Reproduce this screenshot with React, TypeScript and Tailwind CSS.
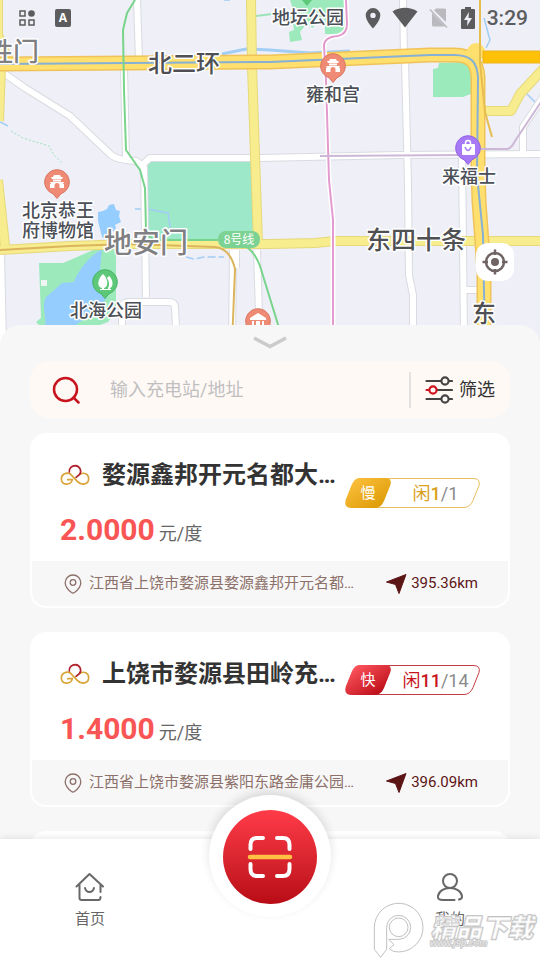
interface Station {
  id: number
  name: string
  price: string
  address: string
  distance: string
  speed: 'slow' | 'fast'
  free: number
  total: number
}

const stations: Station[] = [
  {
    id: 1,
    name: '婺源鑫邦开元名都大…',
    price: '2.0000',
    address: '江西省上饶市婺源县婺源鑫邦开元名都…',
    distance: '395.36km',
    speed: 'slow',
    free: 1,
    total: 1,
  },
  {
    id: 2,
    name: '上饶市婺源县田岭充…',
    price: '1.4000',
    address: '江西省上饶市婺源县紫阳东路金庸公园…',
    distance: '396.09km',
    speed: 'fast',
    free: 11,
    total: 14,
  },
]

const speedStyles = {
  slow: { label: '慢', text: 'text-[#d9a01c]', place: 'mt-[45px]', from: '#fbbf3b', to: '#dc9a05', line: '#e8bd5c' },
  fast: { label: '快', text: 'text-[#c9151e]', place: 'mt-[33px]', from: '#ff5660', to: '#b80a14', line: '#c23a42' },
}

function Temple() {
  return (
    <path
      d="M-6 -5h2l1-2h6l1 2h2l-1 2h-10zM-4 -2.500h8v2h-8zM-7 0h14l-1 2h1v4h-4.500v-2.500a2.500 2.500 0 0 0-5 0V6H-7V2h1z"
      fill="#fff"
    />
  )
}

function Pin({ x, y, fill, stroke, children }: { x: number; y: number; fill: string; stroke: string; children?: React.ReactNode }) {
  return (
    <g transform={`translate(${x} ${y})`}>
      <path d="M0 16.500l-4-4.800A12.300 12.300 0 1 1 4 11.700z" fill={fill} stroke={stroke} strokeWidth="1" />
      {children}
    </g>
  )
}

function CityMap() {
  return (
    <svg
      className="h-full w-full font-['Noto_Sans_CJK_SC',sans-serif]"
      viewBox="0 0 540 345"
      preserveAspectRatio="xMidYMin slice"
      role="img"
      aria-label="地图"
    >
      <rect width="540" height="345" fill="#eeeff7" />

      {/* Parks and water */}
      <path d="M290 0h55v30l-6 4h-14v-14h-8l-4 8-6-4-4 4-3 4 2 8-12 2-1-10 5-2-1-8-3-4 4-6z" fill="#9ceabc" />
      <path d="M433 69l5-1 1-5 26-1c5 2 8 8 8 14v17l-10 4h-30z" fill="#9aeabb" />
      <path d="M146 166l4-6h101l4 80-109-1z" fill="#9de8c8" />
      <path d="M39 263h24l28-12 14-9h11v70l-8 10-8 3v20H45v-14l-9-9 5-4z" fill="#9ceabc" />
      <path d="M102 249l-2 20 6 30-10 10-16 13-4 3H45c2-8-4-18 1-28l16-14 12-1c4-12 16-26 28-33z" fill="#96cdff" />
      <rect x="41" y="280" width="6" height="6" fill="#eef5f2" />
      <path d="M98 212l5-1 4-2 2-4 5-1 2 6 4 1-1 5 2 6-6 3 1 3-5 6-3 7-6-4-4-16z" fill="#96cdff" />
      <g fill="none" stroke="#a2cdf5" strokeWidth="2">
        <path d="M222 54l24-5 24 1 40 3 40-2" strokeWidth="3" />
        <path d="M135 209h8M147 209l21 4 3 20" strokeWidth="1.500" />
        <path d="M186 257l8 2 10-2h20" strokeWidth="1.500" strokeDasharray="8 3" />
        <path d="M484 18l6 22-4 8M527 94l8 8M0 122l8 4M224 0h6" strokeWidth="1.500" />
      </g>
      <path d="M11 131l12 7 26 8 5 9 8 8" fill="none" stroke="#9de3b8" strokeWidth="1" strokeDasharray="2 2" />
      <path d="M256 16l16-2" stroke="#9de3b8" strokeWidth="2" />

      {/* Side streets, grey casing first */}
      {[
        ['#d9dbe0', 8],
        ['#ffffff', 6],
      ].map(([color, width]) => (
        <g key={color} fill="none" stroke={color} strokeWidth={width} strokeLinejoin="round">
          <path d="M137 0l2 60M124 68l2 92M403 0l1 55M405 60l3 125 1 90 4 20v50" />
          <path d="M5 74l20 14 45 28 38 36q6 7 18 8l10 1 8 6 2 130M142 165l8-7h110l140-3 140-1" />
          <path d="M462 155l1 90 1 90M465 290h14M523 155v-28l20-30" />
          <path d="M3 345l-2-90M122 345v-38q1-5 7-5h40q6 0 6 6l2 37M233 250l-1 95M236 250v18M257 250l3 95" />
        </g>
      ))}

      {/* Main roads */}
      {[
        ['#e6d87b', 10],
        ['#f7ed8e', 8],
      ].map(([color, width]) => (
        <g key={color} fill="none" stroke={color} strokeWidth={width} strokeLinejoin="round">
          <path d="M251 0l1 66 6 178M0 250l70-4 60-2h140l45-1 20-2h205M485 111h26l9-17 24-26" />
          <path d="M-2 0v35l12 28M1 66l-2 55M-2 180l7 66" />
        </g>
      ))}
      {[
        ['#efc35a', 15],
        ['#ffdf6d', 12],
      ].map(([color, width]) => (
        <path
          key={color}
          d="M0 64l270-2 160-7h24c18 0 23 8 24 22v94l1 30 5 70v80"
          fill="none"
          stroke={color}
          strokeWidth={width}
        />
      ))}
      <circle cx="476" cy="52" r="9" fill="#ffdf6d" />
      <path d="M483 51h57v12h-57z" fill="#ffc107" stroke="#eeb21a" />
      <path d="M0 64l270-2 160-7h24c18 0 23 8 24 22l-1 98 6 60 2 110" fill="none" stroke="#86b0d6" strokeWidth="2" />
      <path d="M480 0v62l5 50 7 25" fill="none" stroke="#e6bd4f" strokeWidth="2" />

      {/* Metro lines */}
      <g fill="none" strokeWidth="2" strokeLinejoin="round">
        <path d="M0 250l70-4 60-2 85 3c10 1 17 9 20 22l-3 76" stroke="#dbb45c" />
        <path d="M135 0l-8 13-4 17 1 60 2 60 14 20 5 18 1 43q2 8 12 9h60q32-2 42 26l20 65" stroke="#79d48b" />
        <path d="M346 0l1 24q0 10-9 12-14 1-14 10l2 34 3 100 4 40v120" stroke="#fff" strokeWidth="5" />
        <path d="M346 0l1 24q0 10-9 12-14 1-14 10l2 34 3 100 4 40v120" stroke="#e39ace" />
        <path d="M320 156l145-1M481 149h26q4 0 8-8l28-42" stroke="#ccb7d7" />
      </g>
      <rect x="218" y="231" width="42" height="17" rx="8" fill="#7bd293" />
      <text x="239" y="244" fontSize="12" fill="#fff" textAnchor="middle">8号线</text>

      {/* Places */}
      <Pin x={57} y={182} fill="#ef8a75" stroke="#d9745f"><Temple /></Pin>
      <Pin x={333} y={66} fill="#ef8a75" stroke="#d9745f"><Temple /></Pin>
      <Pin x={258} y={321} fill="#ef8a75" stroke="#d9745f">
        <path d="M-8 -3l8-5 8 5v2H-8zM-6 0h2v7h-2zM-2 0h4v7h-4zM4 0h2v7H4z" fill="#fff" />
      </Pin>
      <Pin x={105} y={282} fill="#5cc878" stroke="#49b266">
        <path d="M-2 -8c5 4 6 13 1 14v2h-2V6c-6-1-4-10 1-14zM4 -6c4 3 5 11 1 12v2H3V6c2-3 1-7-1-10zM-5 7H6v1H-5z" fill="#fff" />
      </Pin>
      <Pin x={468} y={148} fill="#a779f6" stroke="#9163e2">
        <rect x="-6" y="-4" width="13" height="11" rx="1" fill="#fff" />
        <path d="M-2.500 -4v-1a2.500 2.500 0 0 1 5 0v1" fill="none" stroke="#fff" strokeWidth="1.500" />
        <path d="M-3 -1q3 7 6 0" fill="none" stroke="#a779f6" strokeWidth="1.500" />
      </Pin>
      <path d="M302 0l5 6 5-6z" fill="#5cc878" />

      <g fill="#4b4f57" stroke="#fff" strokeWidth="3" strokeLinejoin="round" paintOrder="stroke" fontWeight="500" fontSize="18">
        <text x="272" y="24">地坛公园</text>
        <text x="306" y="101">雍和宫</text>
        <text x="442" y="183">来福士</text>
        <text x="22" y="217">北京恭王</text>
        <text x="22" y="237">府博物馆</text>
        <text x="70" y="317">北海公园</text>
        <g fill="#4f5053" fontSize="24">
          <text x="148" y="72">北二环</text>
          <text x="472" y="322">东</text>
          <text x="366" y="249" fontSize="25">东四十条</text>
        </g>
        <g fill="#808083" fontSize="28">
          <text x="104" y="253">地安门</text>
          <text x="-13" y="61" fontSize="26">胜门</text>
        </g>
      </g>
    </svg>
  )
}

function StatusBar() {
  return (
    <div className="absolute inset-x-0 top-0 flex h-9 items-center justify-between pr-3 pl-[18px] text-[#5c5c5e]">
      <div className="flex items-center gap-[19px]">
        <svg width="18" height="18" viewBox="0 0 18 18" fill="none" stroke="currentColor" strokeWidth="1.500">
          <path d="M2 2h5v5H2zM2 11h5v5H2zM11 11h5v5h-5z" />
          <circle cx="13.500" cy="4.500" r="3.300" fill="currentColor" stroke="none" />
        </svg>
        <span className="flex h-[18px] w-4 items-center justify-center rounded-xs bg-[#5c5c5e] font-['Open_Sans',sans-serif] text-xs font-bold text-white">
          A
        </span>
      </div>
      <div className="flex items-center gap-[11px]">
        <svg width="16" height="22" viewBox="0 0 16 22" fill="currentColor">
          <path fillRule="evenodd" d="M8 1a7.300 7.300 0 0 0-7.300 7.300C.7 14 8 21.500 8 21.500S15.300 14 15.300 8.300A7.300 7.300 0 0 0 8 1zm0 4.700a2.700 2.700 0 1 1 0 5.400 2.700 2.700 0 0 1 0-5.400z" />
        </svg>
        <svg width="26" height="22" viewBox="0 0 26 22" fill="currentColor">
          <path d="M0.500 4.500C8 -0.500 18 -0.500 25.500 4.500L13 20.500z" />
        </svg>
        <svg width="20" height="22" viewBox="0 0 20 22" fill="#b9b9be">
          <path d="M7 1.500h8.500a1.500 1.500 0 0 1 1.500 1.500v12L5 3.200zM3 6l13 13.500H4.500A1.500 1.500 0 0 1 3 18z" />
          <path d="M1 2.500l17 18" stroke="#b9b9be" strokeWidth="1.500" />
        </svg>
        <svg width="16" height="24" viewBox="0 0 16 24">
          <path d="M5 1h6v2h3a1 1 0 0 1 1 1v18a1 1 0 0 1-1 1H2a1 1 0 0 1-1-1V4a1 1 0 0 1 1-1h3z" fill="currentColor" />
          <path d="M9 6l-5 8h3.500L7 20l5-8H8.500z" fill="#eeeff7" />
        </svg>
        <time className="text-[21px] leading-6 font-medium">3:29</time>
      </div>
    </div>
  )
}

function BrandMark() {
  return (
    <svg className="shrink-0" width="30" height="22" viewBox="120 68 90 66" fill="none" strokeWidth="5" strokeLinecap="round">
      <path d="M150 97C138 92 124 99 124 112 124 133 154 134 157 115H143" stroke="#d9a43a" />
      <path d="M150 97l22 23C184 134 206 129 206 112 206 97 191 92 180 99" stroke="#d9a43a" />
      <path d="M148 92C146 81 156 73 166 73 181 74 187 92 177 101L168 108" stroke="#b0222d" />
    </svg>
  )
}

function SpeedBadge({ station }: { station: Station }) {
  const style = speedStyles[station.speed]
  const gradient = `tag-${station.speed}`

  return (
    <div className={`relative flex h-[30px] w-[135px] shrink-0 items-center ${style.place}`}>
      <svg className="absolute inset-0" width="135" height="30" viewBox="0 0 135 30">
        <defs>
          <linearGradient id={gradient} x1="0" y1="0" x2="1" y2="1">
            <stop offset="0.100" stopColor={style.from} />
            <stop offset="0.900" stopColor={style.to} />
          </linearGradient>
        </defs>
        <path d="M14 .5h114q8 0 6 7l-6 15q-3 7-9 7H14" fill="#fff" stroke={style.line} />
        <path d="M14 0h26q8 0 5 8l-6 15q-3 7-9 7H7q-9 0-6-9L7 6q3-6 7-6z" fill={`url(#${gradient})`} />
      </svg>
      <span className="relative w-[46px] text-center text-[15px] text-white">{style.label}</span>
      <span className="relative flex-1 pt-0.5 text-center text-lg leading-6 text-[#8a8a8a]">
        <span className={style.text}>
          闲<span className="font-medium">{station.free}</span>
        </span>
        /{station.total}
      </span>
    </div>
  )
}

function StationCard({ station }: { station: Station }) {
  return (
    <article className="overflow-hidden rounded-2xl bg-white">
      <div className="flex h-32 px-[30px]">
        <div className="min-w-0 flex-1 pt-[26px]">
          <div className="flex items-center gap-3">
            <BrandMark />
            <h2 className="text-2xl leading-8 font-bold whitespace-nowrap text-[#333]">{station.name}</h2>
          </div>
          <p className="mt-[21px] flex items-baseline gap-1 text-lg leading-9 text-[#666]">
            <strong className="text-3xl leading-9 font-bold text-[#fa5555]">{station.price}</strong>
            元/度
          </p>
        </div>
        <SpeedBadge station={station} />
      </div>

      {/* Address */}
      <div className="mx-0.5 mb-0.5 flex h-[45px] items-center rounded-b-[14px] bg-[#f7f7f7] pr-[30px] pl-8 text-[15px]">
        <svg className="shrink-0" width="18" height="20" viewBox="0 0 18 20" fill="none" stroke="#8c7069" strokeWidth="1.300">
          <path d="M9 1a7.800 7.800 0 0 0-7.800 7.800c0 4 3.300 7.500 6.300 9.700q1.500 1 3 0c3-2.200 6.300-5.700 6.300-9.700A7.800 7.800 0 0 0 9 1z" />
          <circle cx="9" cy="8.500" r="2.800" />
        </svg>
        <span className="ml-[7px] flex-1 whitespace-nowrap text-[#8c7069]">{station.address}</span>
        <a href="#navigate" className="flex items-center gap-1 text-[#5c1515]">
          <svg width="22" height="22" viewBox="0 0 22 22" fill="currentColor" stroke="currentColor" strokeLinejoin="round">
            <path d="M1.500 9L21 1.500 14 20.500 10.500 11.500z" />
          </svg>
          {station.distance}
        </a>
      </div>
    </article>
  )
}

function SearchBar() {
  return (
    <form className="flex h-[57px] items-center rounded-[20px] bg-[#fff9f6] pr-[15px] pl-[22px]">
      <svg className="shrink-0" width="28" height="28" viewBox="0 0 28 28" fill="none" stroke="#c8141d" strokeWidth="2.500" strokeLinecap="round">
        <circle cx="13.500" cy="13.500" r="11.500" />
        <path d="M21.500 21.500l5 5" />
      </svg>
      <input
        type="text"
        aria-label="输入充电站/地址"
        placeholder="输入充电站/地址"
        className="ml-[30px] min-w-0 flex-1 bg-transparent text-lg outline-none placeholder:text-[#bfbfbf]"
      />
      <div className="h-9 w-0.5 bg-[#e4e2e1]" />
      <button type="button" className="ml-3.5 flex items-center gap-1.5 text-lg text-[#333]">
        <svg width="28" height="28" viewBox="0 0 28 28" fill="none" stroke="#444" strokeWidth="2.200" strokeLinecap="round">
          <path d="M1.500 5H16M24 5h3M12 14h15M1.500 23H16M24 23h3" />
          <circle cx="20" cy="5" r="3.600" />
          <circle cx="20" cy="23" r="3.600" />
          <path d="M1.500 14h2" stroke="#d0121d" />
          <circle cx="8" cy="14" r="3.600" stroke="#d0121d" />
        </svg>
        筛选
      </button>
    </form>
  )
}

function TabBar() {
  return (
    <nav className="relative flex h-[121px] shrink-0 bg-white text-[15px] text-[#666] shadow-[0_0_8px_rgba(0,0,0,0.12)]">
      <a href="#home" className="flex flex-1 flex-col items-center pt-[33px]">
        <svg width="30" height="30" viewBox="0 0 30 30" fill="none" stroke="#686868" strokeWidth="2" strokeLinecap="round" strokeLinejoin="round">
          <path d="M1.500 14.500L14.500 2l13.500 12.500M4.500 12.500V26q0 2 2 2h17q2 0 2-3M25.500 12.500V20" />
          <path d="M10 16q1 4 4.500 4t4.500-4" />
        </svg>
        <span className="mt-[5px] leading-6">首页</span>
      </a>

      {/* Scan */}
      <div className="relative flex-1">
        <div className="absolute -top-11 left-1/2 size-[122px] -translate-x-1/2 rounded-full bg-white shadow-[0_-4px_10px_rgba(0,0,0,0.12)]" />
        <button
          type="button"
          aria-label="扫码充电"
          className="absolute -top-[29px] left-1/2 flex size-[94px] -translate-x-1/2 items-center justify-center rounded-full bg-linear-to-b from-[#ff3b48] to-[#b80b15]"
        >
          <svg width="46" height="44" viewBox="0 0 46 44" fill="none" stroke="#fff" strokeWidth="4" strokeLinecap="round">
            <path d="M3.500 14V10Q3.500 3 10 3H16M30 3h6q6.500 0 6.500 7v4M3.500 29v5q0 7 6.500 7H16M30 41h6q6.500 0 6.500-7v-5" />
            <path d="M3 22H43" stroke="#ffc043" strokeWidth="4.500" />
          </svg>
        </button>
      </div>

      <a href="#mine" className="flex flex-1 flex-col items-center pt-[33px]">
        <svg width="30" height="30" viewBox="0 0 30 30" fill="none" stroke="#686868" strokeWidth="2" strokeLinecap="round">
          <circle cx="15" cy="9" r="7" />
          <path d="M19.500 28H8C4 28 2.500 26.500 3 24 4 19 9 16 15 16s11 3 12 8q.3 3-3 3.500" />
        </svg>
        <span className="mt-[5px] leading-6">我的</span>
      </a>
    </nav>
  )
}

function Watermark() {
  return (
    <svg
      className="pointer-events-none absolute right-0 bottom-0"
      width="170"
      height="60"
      viewBox="30 240 510 180"
      fill="#fff"
      fillOpacity="0.600"
      stroke="#c0c0c0"
      strokeWidth="3"
      strokeLinejoin="round"
    >
      <path d="M43 388V322A73 73 0 1 1 100 394L88 386 102 374 86 358H116A36 36 0 1 0 80 322V388L62 412z" />
      <circle cx="116" cy="322" r="28" />
      <g fontStyle="italic" paintOrder="stroke">
        <text x="212" y="350" fontSize="77" fontWeight="900" strokeWidth="5" fontFamily="'Noto Sans CJK SC', sans-serif">
          精品下载
        </text>
        <text x="210" y="379" fontSize="27" fontWeight="700" strokeWidth="4" fontFamily="'Liberation Sans', sans-serif">
          www.j9p.com
        </text>
      </g>
    </svg>
  )
}

export default function App() {
  return (
    <div className="relative flex h-screen flex-col overflow-hidden bg-[#f7f7f7] font-[Roboto,'Noto_Sans_CJK_SC',sans-serif]">
      <header className="relative h-[345px] shrink-0">
        <CityMap />
        <StatusBar />
        <button
          type="button"
          aria-label="定位"
          className="absolute right-[26px] bottom-16 flex size-[38px] items-center justify-center rounded-xl bg-white"
        >
          <svg width="26" height="26" viewBox="0 0 26 26" fill="none" stroke="#6f6463" strokeWidth="2.500">
            <circle cx="13" cy="13" r="9" />
            <circle cx="13" cy="13" r="4" fill="#6f6463" stroke="none" />
            <path d="M13 .5V6M13 20v5.500M.5 13H6M20 13h5.500" />
          </svg>
        </button>
      </header>

      <main className="relative -mt-5 min-h-0 flex-1 overflow-hidden rounded-t-[20px] bg-[#f7f7f7] px-[30px]">
        <button type="button" aria-label="收起" className="flex h-9 w-full items-center justify-center">
          <svg width="34" height="14" viewBox="0 0 34 14" fill="none" stroke="#cbcbcd" strokeWidth="3.500">
            <path d="M1 2l16 8.500L33 2" />
          </svg>
        </button>
        <SearchBar />
        <div className="mt-[15px] flex flex-col gap-6">
          {stations.map((station) => (
            <StationCard key={station.id} station={station} />
          ))}
          <article className="h-32 rounded-2xl bg-white" />
        </div>
      </main>

      <TabBar />
      <Watermark />
    </div>
  )
}
